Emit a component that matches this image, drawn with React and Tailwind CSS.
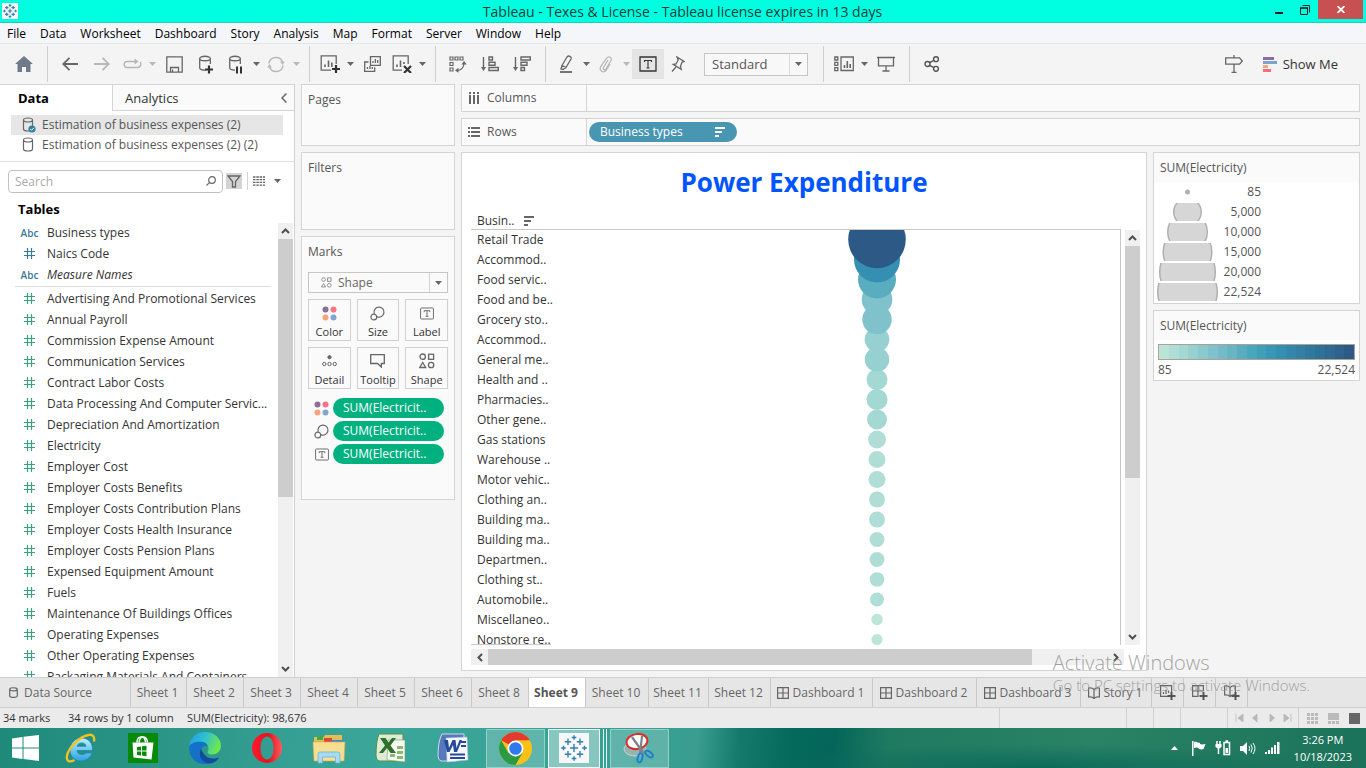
import React from 'react';

const UI = "font-['Open_Sans','Noto_Sans',sans-serif]";

const Svg = ({ w = 18, h = 18, children, className = '', ...rest }) => (
  <svg width={w} height={h} viewBox={`0 0 ${w} ${h}`} fill="none" stroke="#666" strokeWidth="1.3" className={`shrink-0 ${className}`} aria-hidden="true" {...rest}>
    {children}
  </svg>
);

const TableauMark = ({ size, weight = 1.4 }) => {
  const plus = (x, y, r) => `M${x - r} ${y}H${x + r}M${x} ${y - r}V${y + r}`;
  return (
    <svg width={size} height={size} viewBox="0 0 30 30" fill="none" stroke="#2f80ad" strokeWidth={weight} aria-hidden="true">
      <rect width="30" height="30" fill="#f7f7f7" stroke="none" />
      <path d={[plus(15, 15, 4), plus(15, 4.5, 2.3), plus(15, 25.5, 2.3), plus(4.5, 15, 2.3), plus(25.5, 15, 2.3), plus(9, 8.7, 3.2), plus(21, 8.7, 3.2), plus(9, 21.3, 3.2), plus(21, 21.3, 3.2)].join('')} />
    </svg>
  );
};

const Caret = ({ dim }) => (
  <svg width="7" height="4" viewBox="0 0 7 4" aria-hidden="true"><path d="M0 0h7L3.5 4z" fill={dim ? '#b8b8b8' : '#666'} /></svg>
);

const SortDesc = ({ color = '#666' }) => (
  <svg width="10" height="10" viewBox="0 0 10 10" aria-hidden="true" fill={color}><path d="M0 0h10v2H0zM0 4h7v2H0zM0 8h4v2H0z" /></svg>
);

const Cylinder = ({ check }) => (
  <Svg w={14} h={16} strokeWidth="1.2">
    <path d="M1.5 3v9c0 1.3 2 2 4.500 2s4.500-.7 4.500-2V3M1.500 3c0-1.200 2-2 4.500-2s4.500.8 4.500 2-2 2-4.500 2-4.500-.8-4.500-2z" />
    {check && <><circle cx="10" cy="12" r="3.600" fill="#2f80a3" stroke="none" /><path d="M8.300 12l1.300 1.300 2.200-2.500" stroke="#fff" strokeWidth="1" /></>}
  </Svg>
);

const BoxT = ({ w = 15, h = 13 }) => (
  <svg width={w} height={h} viewBox="0 0 15 13" fill="none" stroke="#666" aria-hidden="true">
    <rect x=".6" y=".6" width="13.800" height="11.800" rx="1" />
    <path d="M4.500 5V3.500h6V5M7.500 3.500v6M6 9.500h3" />
  </svg>
);
const ColorDots = () => (
  <svg width="15" height="15" viewBox="0 0 15 15" aria-hidden="true">
    <circle cx="3.500" cy="3.500" r="3" fill="#8a6f9c" /><circle cx="11.500" cy="3.500" r="3" fill="#fb7484" />
    <circle cx="3.500" cy="11.500" r="3" fill="#f4a57d" /><circle cx="11.500" cy="11.500" r="3" fill="#82a5cd" />
  </svg>
);
const SizeIcon = () => (
  <Svg w={15} h={15} strokeWidth="1.200"><path d="M4.300 7.800A5 5 0 1 1 7 10.700" /><circle cx="3.800" cy="11" r="2.900" /></Svg>
);
const ShapeIcon = ({ size = 16, stroke = '#666' }) => (
  <svg width={size} height={size} viewBox="0 0 16 16" fill="none" stroke={stroke} strokeWidth="1.300" aria-hidden="true">
    <circle cx="3.700" cy="3.700" r="2.700" /><rect x="9.600" y="1.300" width="5" height="5" /><path d="M3.700 9.500l3 5h-6z" /><circle cx="12.100" cy="12" r="2.700" />
  </svg>
);
const DetailIcon = () => (
  <Svg w={15} h={12} strokeWidth="1"><circle cx="7.500" cy="2.200" r="1.600" fill="#666" /><circle cx="2.300" cy="9" r="1.700" /><circle cx="7.500" cy="9" r="1.700" /><circle cx="12.700" cy="9" r="1.700" /></Svg>
);
const TooltipIcon = () => <Svg w={15} h={14}><path d="M.7.7h13.600v8.800h-3v3.500L7.500 9.500H.7z" /></Svg>;

const icons = {
  home: <Svg w={18} h={16} stroke="none"><path d="M9 0l9 8h-2.500v8H11v-5H7v5H2.500V8H0z" fill="#707b8a" /></Svg>,
  back: <Svg w={16} h={14} strokeWidth="1.800"><path d="M16 7H1M7.500.8L1.200 7l6.300 6.200" /></Svg>,
  forward: <Svg w={16} h={14} stroke="#b8b8b8" strokeWidth="1.800"><path d="M0 7h15M8.500.8L14.800 7l-6.300 6.200" /></Svg>,
  redo: <Svg w={19} h={12} stroke="#b5b5b5" strokeWidth="1.400"><path d="M14 3.500H4.500c-4.500 0-4.500 6 0 6h10c3.500 0 4-4 2.500-5.500" /><path d="M11.500.5l4 3-4 3z" fill="#b5b5b5" stroke="none" /></Svg>,
  save: <Svg w={17} h={17}><path d="M.8.8h15.400v15.400H.8zM4.500 16v-4.500h8V16M6.500 16v-2.500" /></Svg>,
  dbAdd: <Svg w={16} h={19}><path d="M8 15c-4 .3-6.300-.8-6.300-2V3.500M1.700 3.500c0-3 10.600-3 10.600 0s-10.600 3-10.600 0M12.300 3.500V9" /><path d="M7 14.500h8M11 10.500v8" stroke="#333" strokeWidth="2.200" /></Svg>,
  dbPause: <Svg w={16} h={19}><path d="M7 15c-3.500.2-5.300-.8-5.300-2V3.500M1.700 3.500c0-3 10.600-3 10.600 0s-10.600 3-10.600 0M12.300 3.500V9" /><path d="M9 11.500v7M13 11.500v7" stroke="#333" strokeWidth="2" /></Svg>,
  refresh: <Svg w={18} h={17} stroke="#b8b8b8" strokeWidth="1.500"><path d="M2 7.500A7 7 0 0 1 15.500 6M16 9.500A7 7 0 0 1 2.500 11" /><path d="M13 5.500h4.800L15.500 9zM.2 11.500H5L2.500 8z" fill="#b8b8b8" stroke="none" /></Svg>,
  newSheet: <Svg w={20} h={18}><path d="M11 15.200H1.200V.8h15V9" /><path d="M5 12V9.500M8.500 12V5.500M11.800 12V7.500" strokeWidth="1.600" /><path d="M12 14h8M16 10v8" stroke="#333" strokeWidth="2.200" /></Svg>,
  duplicate: <Svg w={17} h={17}><path d="M6.500.7h9.800v8.600H6.500zM9 7V5M11.400 7V3M13.700 7V4M4.500 6H.7v9.300h10v-4M3.500 13v-2M6 13v-3M8.300 13v-2" /></Svg>,
  clear: <Svg w={20} h={18}><path d="M10 15.200H1.200V.8h15V9" /><path d="M5 12V9.500M8.500 12V5.500M12 9V7" strokeWidth="1.600" /><path d="M12 11l7 7M19 11l-7 7" stroke="#333" strokeWidth="2.200" /></Svg>,
  swap: <Svg w={18} h={17} strokeWidth="1.200"><path d="M1 1h3v3H1zM6 1h3v3H6zM11 1h3v3h-3zM1 6.500h3v3H1zM1 12h3v3H1zM7.500 14.500c5 0 7.500-3 7.500-8" /><path d="M9.500 11.800v5L6 14.500zM12.500 8.500L15 5l2.700 3.500z" fill="#666" stroke="none" /></Svg>,
  sortAsc: <Svg w={18} h={16} strokeWidth="1.400"><path d="M2.500 1v11M8 1h3.500v3H8zM8 6.200h6v3H8zM8 11.500h9.300v3H8z" /><path d="M0 11h5l-2.500 4z" fill="#666" stroke="none" /></Svg>,
  sortDesc: <Svg w={18} h={16} strokeWidth="1.400"><path d="M2.500 1v11M8 1h9.300v3H8zM8 6.200h6v3H8zM8 11.500h3.500v3H8z" /><path d="M0 11h5l-2.500 4z" fill="#666" stroke="none" /></Svg>,
  highlight: <Svg w={16} h={18}><path d="M4 10.500L9 2c1.500-2 5-.5 4 2l-5 8.500-4-2zM4 10.500l-1 3.500 2 .5 3-2" /><path d="M2 17h12" strokeWidth="1.800" /></Svg>,
  clip: <Svg w={14} h={17} stroke="#b8b8b8"><path d="M9 4L4.500 11.500c-1 2 1.500 3 2.500 1.500l5-8.500c1.500-3-2.500-5-4.500-2L2 10c-2.500 4.500 2 7.500 5 4.500l4-6.500" /></Svg>,
  label: <Svg w={18} h={16} stroke="#333" strokeWidth="1.300"><path d="M1 1h16v14H1z" /><path d="M5.500 6V4.500h7V6M9 4.500v7.500M7.500 12h3" strokeWidth="1.100" /></Svg>,
  pin: <Svg w={14} h={16}><path d="M6 1l7 4.500-2 .8-1.500 4 .7 3-8-5 2.800-.5L7.200 4zM5 11l-4 4.500" /></Svg>,
  cards: <Svg w={20} h={16} strokeWidth="1.300"><path d="M.8 1h3v3h-3zM.8 6.300h3v3h-3zM.8 11.700h3v3h-3zM7 1h12.300v13.500H7z" /><path d="M10.500 12V9M13.300 12V5M16.200 12V8" strokeWidth="1.600" /></Svg>,
  present: <Svg w={18} h={16}><path d="M0 1.500h18M1.500 1.500v8.300h15V1.500M9 10v5M5.500 15h7" /></Svg>,
  share: <Svg w={16} h={16} stroke="#555" strokeWidth="1.400"><circle cx="3.500" cy="8" r="2.500" /><circle cx="12" cy="3.200" r="2.400" /><circle cx="12" cy="12.800" r="2.400" /><path d="M5.600 6.700l4.300-2.400M5.600 9.300l4.300 2.400" /></Svg>,
  signpost: <Svg w={18} h={18}><path d="M.7 2.800h13.800L17.300 6l-2.800 3.200H.7zM9 0v2.800M9 9.200V17M6.500 17.300h5" /></Svg>,
  showMe: <Svg w={14} h={15} stroke="none"><path d="M0 0h11v3H0z" fill="#8a6f9c" /><path d="M0 4h14v3H0z" fill="#7ba3cf" /><path d="M0 8h5v3H0z" fill="#f4a57d" /><path d="M0 12h8v3H0z" fill="#fb6a7c" /></Svg>,
};

const Tool = ({ icon, label, w = 'w-8', active }) => (
  <button type="button" aria-label={label} className={`${w} flex h-[30px] shrink-0 items-center justify-center ${active ? 'bg-[#e4e4e4]' : ''}`}>{icons[icon]}</button>
);
const Drop = ({ label, dim }) => (
  <button type="button" aria-label={label} className="flex h-[30px] w-3 shrink-0 items-center justify-center"><Caret dim={dim} /></button>
);
const Sep = ({ wide }) => <div className={`mr-[6px] h-9 w-px shrink-0 bg-[#d0d0d0] ${wide ? 'ml-[15px]' : 'ml-[7px]'}`} />;

function Toolbar() {
  return (
    <div className="flex h-10 shrink-0 items-center bg-[#f4f4f4] pl-2 pr-7">
      <Tool icon="home" label="Start page" /><Sep />
      <Tool icon="back" label="Undo" /><Tool icon="forward" label="Redo" />
      <Tool icon="redo" label="Replay" w="w-7" /><Drop label="Replay options" dim />
      <Tool icon="save" label="Save" /><Tool icon="dbAdd" label="New data source" />
      <Tool icon="dbPause" label="Pause updates" w="w-7" /><Drop label="Pause options" />
      <Tool icon="refresh" label="Run update" w="w-7" /><Drop label="Update options" dim /><Sep />
      <Tool icon="newSheet" label="New worksheet" w="w-7" /><Drop label="New options" />
      <Tool icon="duplicate" label="Duplicate" /><Tool icon="clear" label="Clear sheet" w="w-7" /><Drop label="Clear options" /><Sep />
      <Tool icon="swap" label="Swap rows and columns" /><Tool icon="sortAsc" label="Sort ascending" /><Tool icon="sortDesc" label="Sort descending" /><Sep />
      <Tool icon="highlight" label="Highlight" w="w-7" /><Drop label="Highlight options" />
      <Tool icon="clip" label="Group" w="w-7" /><Drop label="Group options" dim />
      <Tool icon="label" label="Show mark labels" active /><Tool icon="pin" label="Fix axes" w="w-7" />
      <div className="relative ml-3 flex h-[23px] w-[104px] shrink-0 items-center border border-[#c6c6c6] bg-[#f8f8f8]">
        <select aria-label="Fit" className="h-full w-full appearance-none bg-transparent pl-[7px] text-[13px] leading-5 text-[#555] outline-none"><option>Standard</option></select>
        <span className="pointer-events-none absolute inset-y-0 right-0 flex w-[18px] items-center justify-center border-l border-[#dcdcdc]"><Caret /></span>
      </div>
      <Sep wide />
      <Tool icon="cards" label="Show cards" w="w-7" /><Drop label="Card options" /><Tool icon="present" label="Presentation mode" /><Sep />
      <Tool icon="share" label="Share" />
      <div className="flex-1" />
      <Tool icon="signpost" label="Guide" w="w-7" />
      <button type="button" className="ml-[15px] flex items-center gap-[6px] text-[13px] leading-5 text-[#333]">{icons.showMe}Show Me</button>
    </div>
  );
}

const Chevron = ({ d }) => <svg width="9" height="6" viewBox="0 0 9 6" fill="none" stroke="#505050" strokeWidth="2" aria-hidden="true"><path d={d} /></svg>;
const VScroll = ({ thumb }) => (
  <div className="flex w-[15px] shrink-0 flex-col bg-[#f0f0f0]">
    <button type="button" aria-label="Scroll up" className="flex h-4 items-center justify-center"><Chevron d="M1 5l3.500-3.500L8 5" /></button>
    <div className={`${thumb} bg-[#cdcdcd]`} />
    <div className="flex-1" />
    <button type="button" aria-label="Scroll down" className="flex h-4 items-center justify-center"><Chevron d="M1 1l3.500 3.500L8 1" /></button>
  </div>
);

const dims = [['Abc', 'Business types'], ['#', 'Naics Code'], ['Abc', 'Measure Names']];
const measures = ['Advertising And Promotional Services', 'Annual Payroll', 'Commission Expense Amount', 'Communication Services', 'Contract Labor Costs', 'Data Processing And Computer Servic...', 'Depreciation And Amortization', 'Electricity', 'Employer Cost', 'Employer Costs Benefits', 'Employer Costs Contribution Plans', 'Employer Costs Health Insurance', 'Employer Costs Pension Plans', 'Expensed Equipment Amount', 'Fuels', 'Maintenance Of Buildings Offices', 'Operating Expenses', 'Other Operating Expenses', 'Packaging Materials And Containers'];

const HashIcon = ({ color }) => <svg width="11" height="11" viewBox="0 0 11 11" fill="none" stroke={color} strokeWidth="1.200" aria-hidden="true"><path d="M3.500 0v11M7.500 0v11M0 3.500h11M0 7.500h11" /></svg>;

const Field = ({ kind, name, color, italic }) => (
  <li className={`flex h-[21px] shrink-0 items-center whitespace-nowrap text-[12px] leading-5 text-[#333] ${italic ? 'italic' : ''}`}>
    <span className="flex w-[29px] shrink-0 justify-center not-italic">
      {kind === 'Abc' ? <span className="text-[10px] font-semibold text-[#3a7a99]">Abc</span> : <HashIcon color={color} />}
    </span>
    <span className="ml-[3px]">{name}</span>
  </li>
);

function DataPane() {
  return (
    <aside className="flex w-[295px] shrink-0 flex-col border-r border-[#d0d0d0] bg-white">
      <div className="flex h-[27px] shrink-0 border-t border-[#d4d4d4]">
        <button type="button" className="w-[112px] pl-[18px] text-left text-[13px] font-bold leading-5 text-black">Data</button>
        <button type="button" className="flex-1 border-b border-l border-[#d4d4d4] bg-[#fafafa] pl-3 text-left text-[13px] leading-5 text-[#333]">Analytics</button>
        <button type="button" aria-label="Collapse pane" className="flex w-[21px] items-center justify-center border-b border-[#d4d4d4] bg-[#fafafa]"><Svg w={6} h={10} strokeWidth="1.500"><path d="M5.500.5L1 5l4.500 4.500" /></Svg></button>
      </div>
      <ul className="flex h-[51px] shrink-0 flex-col border-b border-[#e0e0e0] pt-1 text-[12px] leading-5 text-[#555]">
        <li className="ml-[11px] mr-[11px] flex h-5 items-center gap-[6px] bg-[#e6e6e6] pl-[11px]"><Cylinder check /><span>Estimation of business expenses (2)</span></li>
        <li className="ml-[11px] mr-[11px] flex h-5 items-center gap-[6px] pl-[11px]"><Cylinder /><span>Estimation of business expenses (2) (2)</span></li>
      </ul>
      <div className="flex h-[37px] shrink-0 items-center pl-2 pt-px">
        <div className="flex h-[23px] w-[215px] items-center rounded-sm border border-[#c0c0c0] pr-[6px]">
          <input type="text" aria-label="Search" placeholder="Search" className="h-full min-w-0 flex-1 px-[6px] text-[12px] outline-none placeholder:text-[#aaa]" />
          <Svg w={10} h={10} strokeWidth="1.200"><circle cx="6" cy="4" r="3.300" /><path d="M3.700 6.300L.5 9.500" /></Svg>
        </div>
        <button type="button" aria-label="Filter" className="ml-[3px] flex size-4 items-center justify-center bg-[#d4d4d4]"><Svg w={14} h={13}><path d="M1 1h12L8.500 6.500V12h-3V6.500z" /></Svg></button>
        <div className="mx-[5px] h-[18px] w-px bg-[#d4d4d4]" />
        <button type="button" aria-label="View options" className="flex items-center gap-[9px]">
          <Svg w={12} h={10} strokeWidth="1.300" strokeDasharray="2.500 .8"><path d="M0 1h12M0 3.700h12M0 6.400h12M0 9.100h12" /></Svg><Caret />
        </button>
      </div>
      <h2 className="h-[24px] shrink-0 pl-[18px] text-[13px] font-bold leading-5 text-black">Tables</h2>
      <div className="mr-px flex min-h-0 flex-1">
        <div className="min-w-0 flex-1 overflow-hidden pl-[15px]">
          <ul className="-mt-px mr-[7px] border-b border-[#dcdcdc] pb-px">{dims.map(([k, n]) => <Field key={n} kind={k} name={n} color="#3a7a99" italic={n === 'Measure Names'} />)}</ul>
          <ul className="pt-px">{measures.map((n) => <Field key={n} kind="#" name={n} color="#3aa17e" />)}</ul>
        </div>
        <VScroll thumb="h-[258px]" />
      </div>
    </aside>
  );
}

const card = 'border border-[#d4d4d4] bg-[#fafafa]';
const MarkButton = ({ icon, label }) => (
  <button type="button" className="flex h-[42px] flex-col items-center justify-between border border-[#d0d0d0] pt-[5px] text-[11px] leading-4 text-[#333]">
    <span className="flex h-4 items-center">{icon}</span><span>{label}</span>
  </button>
);

function CardsColumn() {
  return (
    <div className="flex w-[154px] shrink-0 flex-col gap-[6px] text-[12px] leading-4 text-[#555]">
      <section className={`${card} h-[62px] px-[6px] pt-[7px]`}>Pages</section>
      <section className={`${card} h-[78px] px-[6px] pt-[7px]`}>Filters</section>
      <section className={`${card} h-[264px] px-[6px] pt-[7px]`}>
        <h3>Marks</h3>
        <div className="relative mt-3 flex h-[21px] items-center border border-[#c6c6c6]">
          <span className="pointer-events-none absolute left-3"><ShapeIcon size={11} stroke="#888" /></span>
          <select aria-label="Mark type" className="h-full w-full appearance-none bg-transparent pl-[29px] text-[12px] leading-4 text-[#666] outline-none"><option>Shape</option></select>
          <span className="pointer-events-none absolute inset-y-0 right-0 flex w-[18px] items-center justify-center border-l border-[#d4d4d4]"><Caret /></span>
        </div>
        <div className="mt-[6px] grid grid-cols-3 gap-[6px]">
          <MarkButton icon={<ColorDots />} label="Color" /><MarkButton icon={<SizeIcon />} label="Size" /><MarkButton icon={<BoxT w={14} h={13} />} label="Label" />
          <MarkButton icon={<DetailIcon />} label="Detail" /><MarkButton icon={<TooltipIcon />} label="Tooltip" /><MarkButton icon={<ShapeIcon />} label="Shape" />
        </div>
        <ul className="mt-[9px] flex flex-col gap-[3px]">
          {[<ColorDots />, <SizeIcon />, <BoxT w={14} h={13} />].map((icon, i) => (
            <li key={i} className="flex items-center"><span className="flex w-[25px] justify-center pl-[2px]">{icon}</span>
              <span className="mr-[4px] flex-1 rounded-full bg-[#00b180] pl-[10px] text-[12px] leading-5 text-white">SUM(Electricit..</span></li>
          ))}
        </ul>
      </section>
    </div>
  );
}

const Shelf = ({ icon, name, children }) => (
  <div className={`${card} flex h-7 shrink-0`}>
    <div className="flex w-[125px] shrink-0 items-center gap-[7px] border-r border-[#d4d4d4] pl-[6px] text-[12px] leading-5 text-[#555]">{icon}{name}</div>
    <div className="flex flex-1 items-center pl-[2px]">{children}</div>
  </div>
);

const rows = [['Retail Trade', 28.800, '#2c5985'], ['Accommod..', 23, '#348fb2'], ['Food servic..', 19, '#5aadbf'], ['Food and be..', 15.300, '#80c2cb'], ['Grocery sto..', 14.700, '#80c2cb'], ['Accommod..', 12.300, '#96d0d0'], ['General me..', 12.200, '#96d0d0'], ['Health and ..', 10.500, '#a3d8d3'], ['Pharmacies..', 10.500, '#a3d8d3'], ['Other gene..', 10, '#a3d8d3'], ['Gas stations', 9, '#b0ded6'], ['Warehouse ..', 8.500, '#b0ded6'], ['Motor vehic..', 8.500, '#b0ded6'], ['Clothing an..', 8, '#b0ded6'], ['Building ma..', 8, '#b0ded6'], ['Building ma..', 7.500, '#b0ded6'], ['Departmen..', 7.500, '#b0ded6'], ['Clothing st..', 7.300, '#b0ded6'], ['Automobile..', 7, '#b0ded6'], ['Miscellaneo..', 5.700, '#bce5d9'], ['Nonstore re..', 5.500, '#bce5d9']];

function Sheet() {
  return (
    <section className="flex min-w-0 flex-1 flex-col border border-[#d4d4d4] bg-white pb-[5px] pl-[9px] pr-[6px]">
      <h1 className="h-[59px] shrink-0 pr-[3px] pt-[11px] text-center text-[26px] font-bold leading-9 text-[#0055ff]">Power Expenditure</h1>
      <div className="flex min-h-0 flex-1 gap-1">
        <div className="flex min-w-0 flex-1 flex-col">
          <div className="flex h-[18px] shrink-0 items-center gap-[9px] border-b border-[#c8c8c8] pl-[6px] text-[12px] leading-4 text-[#333]">Busin..<SortDesc /></div>
          <div className="flex min-h-0 flex-1 overflow-hidden border-r border-[#c8c8c8]">
            <div className="flex w-20 shrink-0 flex-col border-b border-[#c8c8c8]">
              <ul className="min-h-0 flex-1 overflow-y-clip pl-[6px]">
                {rows.map(([n], i) => <li key={i} className="h-5 whitespace-nowrap text-[12px] leading-5 text-[#333]">{n}</li>)}
              </ul>
            </div>
            <svg width="652" height="420" className="shrink-0" role="img" aria-label="Electricity by business type">
              {rows.map(([, r, c], i) => <circle key={i} cx="326" cy={9.5 + i * 20} r={r} fill={c} />).reverse()}
            </svg>
          </div>
        </div>
        <div className="flex pt-[18px]"><VScroll thumb="h-[232px]" /></div>
      </div>
      <div className="mr-4 mt-1 flex h-4 shrink-0 items-center bg-[#f0f0f0]">
        <button type="button" aria-label="Scroll left" className="flex h-full w-[17px] items-center justify-center"><svg width="6" height="9" fill="none" stroke="#505050" strokeWidth="2"><path d="M5 1L1.500 4.500 5 8" /></svg></button>
        <div className="h-full w-5/6 bg-[#cdcdcd]" />
        <div className="flex-1" />
        <button type="button" aria-label="Scroll right" className="flex h-full w-[17px] items-center justify-center"><svg width="6" height="9" fill="none" stroke="#505050" strokeWidth="2"><path d="M1 1l3.500 3.500L1 8" /></svg></button>
      </div>
    </section>
  );
}

const sizes = [['85', 2.500], ['5,000', 13.800], ['10,000', 19.800], ['15,000', 24.300], ['20,000', 27.800], ['22,524', 29.800]];
const ramp = ['#bce5d9', '#b0ded6', '#a3d8d3', '#96d0d0', '#8bc9ce', '#80c2cb', '#74bbc7', '#68b4c3', '#5aadbf', '#4aa6bb', '#429eb8', '#3b96b5', '#348fb2', '#3487ab', '#3380a4', '#31789d', '#307197', '#2f6991', '#2e618b', '#2c5985'];

function Legends() {
  return (
    <div className="flex w-[207px] shrink-0 flex-col gap-[6px] text-[12px] leading-5 text-[#555]">
      <section className="h-[152px] border border-[#d4d4d4] bg-white">
        <h3 className="h-[29px] bg-[#fafafa] pl-[6px] pt-[5px]">SUM(Electricity)</h3>
        <ul>
          {sizes.map(([n, r]) => (
            <li key={n} className="flex h-5 items-center">
              <svg width="66" height="18" className="shrink-0" aria-hidden="true"><circle cx="33.500" cy="9" r={r} fill={r < 5 ? '#b0b0b0' : '#d6d6d6'} stroke="#b0b0b0" strokeWidth={r < 5 ? 0 : 1.5} /></svg>
              <span className="w-[41px] text-right">{n}</span>
            </li>
          ))}
        </ul>
      </section>
      <section className="h-[71px] border border-[#d4d4d4] bg-white">
        <h3 className="h-[29px] bg-[#fafafa] pl-[6px] pt-[5px]">SUM(Electricity)</h3>
        <div className="mx-1 mt-1 flex h-4 border border-[#a9a396]">{ramp.map((c) => <div key={c} className="flex-1" style={{ background: c }} />)}</div>
        <div className="flex justify-between px-1">
          <span>85</span><span>22,524</span>
        </div>
      </section>
    </div>
  );
}

const GridIcon = ({ add }) => <Svg w={add ? 16 : 12} h={add ? 15 : 12} strokeWidth="1.200"><path d={add ? 'M6.500 11.400H.6V.6h10.800V6M6 .6v10.800M.6 6h10.800' : 'M.6.6h10.800v10.800H.6zM6 .6v10.800M.6 6h10.800'} />{add && <path d="M7.500 11h8M11.500 7v8" stroke="#555" strokeWidth="2" />}</Svg>;
const BookIcon = ({ add }) => <Svg w={add ? 16 : 12} h={add ? 15 : 12} strokeWidth="1.200"><path d="M6 2.500v9M.6 1c2.500-.5 4 0 5.400 1.500C7.400 1 9 .5 11.400 1v9C9 9.500 7.400 10 6 11.500 4.600 10 3 9.500.6 10z" />{add && <path d="M7.500 11h8M11.500 7v8" stroke="#555" strokeWidth="2" />}</Svg>;
const SheetAdd = () => <Svg w={16} h={15} strokeWidth="1.200"><path d="M8 11.400H.6V.6h11V7M3.500 9V7M6 9V4.500M8.500 8V5.500" /><path d="M7.500 11h8M11.500 7v8" stroke="#555" strokeWidth="2" /></Svg>;

const tabs = [['Sheet 1', 'w-[56px]'], ['Sheet 2', 'w-[57px]'], ['Sheet 3', 'w-[57px]'], ['Sheet 4', 'w-[57px]'], ['Sheet 5', 'w-[57px]'], ['Sheet 6', 'w-[57px]'], ['Sheet 8', 'w-[57px]'], ['Sheet 9', 'w-[57px]'], ['Sheet 10', 'w-[63px]'], ['Sheet 11', 'w-[60px]'], ['Sheet 12', 'w-[62px]'], ['Dashboard 1', 'w-[102px]', 'g'], ['Dashboard 2', 'w-[104px]', 'g'], ['Dashboard 3', 'w-[104px]', 'g'], ['Story 1', 'w-[71px]', 'b']];

const Tabs = () => (
  <nav className="flex h-[31px] shrink-0 overflow-hidden border-y border-[#d0d0d0] bg-[#e6e6e6] text-[12px] leading-5 text-[#666]">
    <button type="button" className="flex w-[131px] shrink-0 items-center gap-[6px] border-r border-[#c8c8c8] pl-[9px]">
      <Svg w={9} h={11} strokeWidth="1.200"><path d="M.7 2.300v6.400C.7 11 8.300 11 8.300 8.700V2.300M.7 2.300C.7.200 8.300.200 8.300 2.300S.7 4.400.7 2.300" /></Svg>Data Source
    </button>
    {tabs.map(([n, w, k]) => (
      <button key={n} type="button" className={`${w} flex shrink-0 items-center justify-center gap-1 whitespace-nowrap border-r border-[#c8c8c8] pr-[2px] ${n === 'Sheet 9' ? 'bg-white font-bold text-[#555]' : ''}`}>
        {k === 'g' && <GridIcon />}{k === 'b' && <BookIcon />}{n}
      </button>
    ))}
    {[['New sheet', <SheetAdd />], ['New dashboard', <GridIcon add />], ['New story', <BookIcon add />]].map(([l, ic]) => (
      <button key={l} type="button" aria-label={l} className="flex w-8 shrink-0 items-center justify-center border-r border-[#c8c8c8]">{ic}</button>
    ))}
  </nav>
);

const Status = () => (
  <div className="flex h-5 shrink-0 items-center bg-[#ebebeb] pl-[3px] text-[11px] leading-5 text-[#333]">
    <span className="w-[65px]">34 marks</span><span className="w-[119px]">34 rows by 1 column</span><span className="flex-1">SUM(Electricity): 98,676</span>
    <div className="flex h-full [&>*]:border-l [&>*]:border-[#d0d0d0]">
      <div className="w-[127px]" /><div className="w-[27px]" /><div className="w-[27px]" /><div className="w-[47px]" />
      <div className="flex w-[71px] items-center justify-around px-[3px]">
        {['M1 0v8M8 0v8L3 4z', 'M6 0v8L1.500 4z', 'M3 0v8l4.500-4z', 'M8 0v8M1 0v8l5-4z'].map((d, i) => (
          <button key={i} type="button" aria-label={['First', 'Previous', 'Next', 'Last'][i]}><svg width="9" height="8" fill="#b8b8b8" stroke="#b8b8b8" strokeWidth=".8"><path d={d} /></svg></button>
        ))}
      </div>
      <div className="flex w-[68px] items-center justify-between pl-2 pr-[6px]">
        <svg width="11" height="11" fill="#bbb" aria-label="Tabs"><path d="M0 0h3v3H0zM4 0h3v3H4zM8 0h3v3H8zM0 4h3v3H0zM4 4h3v3H4zM8 4h3v3H8zM0 8h3v3H0zM4 8h3v3H4zM8 8h3v3H8z" /></svg>
        <svg width="11" height="11" fill="#bbb" aria-label="Filmstrip"><path d="M0 0h11v7H0zM0 8h3v3H0zM4 8h3v3H4zM8 8h3v3H8z" /></svg>
        <svg width="11" height="11" fill="#666" aria-label="Sheet sorter"><path d="M0 0h11v11H0z" /></svg>
      </div>
    </div>
  </div>
);

const apps = {
  'Internet Explorer': (
    <svg width="32" height="32" viewBox="0 0 32 32" fill="none">
      <defs><linearGradient id="ie" x2="0" y2="1"><stop stopColor="#bdf0ff" /><stop offset="1" stopColor="#2ba3df" /></linearGradient></defs>
      <path d="M27.500 18.500H12c.3 4 6 5.500 9 2.500h6C25 26.500 20.500 29 16 29 9 29 5 24 5 18S9.500 6 16.500 6C23.500 6 28 11 27.500 18.500zM12 14.300h9c-.5-4.500-8-4.500-9 0z" fill="url(#ie)" stroke="#1d86c2" strokeWidth=".8" />
      <path d="M29 9.500c1-5-1.500-7.500-5.500-6.500C15 4.500 4 15 2 23.500 1 29 4 31 9.500 28" stroke="#f6c21c" strokeWidth="2.300" />
    </svg>),
  Store: (
    <svg width="30" height="30" viewBox="0 0 30 30"><path d="M0 0h30v30H0z" fill="#078a07" /><path d="M4.500 9.500h21l-2 17-18-2z" fill="#fff" /><path d="M9 9.500c0-7 8-8 8.500 0M11 9.500c1-8 8-6.500 8.500 0" fill="none" stroke="#fff" strokeWidth="1.500" /><path d="M9 14l4-.5v4H9zM14 13.300l4.500-.5v4.700H14zM9 18.500h4v4l-4-.5zM14 18.500h4.500v4.700l-4.500-.6z" fill="#078a07" /></svg>),
  Edge: (
    <svg width="34" height="34" viewBox="0 0 32 32">
      <defs><linearGradient id="eg" x2="1" y2=".3"><stop stopColor="#2499e2" /><stop offset=".5" stopColor="#2bbfd8" /><stop offset="1" stopColor="#6ce552" /></linearGradient></defs>
      <path d="M1 15C2 6 8 1 16 1c9 0 15 6 15 13 0 5-4 8-8.500 8-3.500 0-5-1.500-3.500-3.500C20.500 14 17 10 12 10 6 10 2 13 1 15z" fill="url(#eg)" />
      <path d="M1 15c1-3 5-5 9.500-5 5.500 0 7.500 2 8 4-6-1-9 7-4 13 2 2 4 3 6 3.500-5 1.500-11 .5-15-3.500-3-3-4.700-7-4.500-12z" fill="#1471c7" />
      <path d="M12.500 17c-4 6 1 13.500 8 13.500 4 0 7-2.500 9-6-6 3-14 1.500-17-7.500z" fill="#104e9c" />
    </svg>),
  Opera: (
    <svg width="32" height="32" viewBox="0 0 32 32"><defs><linearGradient id="op" x2="1"><stop stopColor="#ff1b2d" /><stop offset=".55" stopColor="#e2121f" /><stop offset="1" stopColor="#ff5c5c" /></linearGradient></defs><path fillRule="evenodd" d="M16 1a15 15 0 1 0 0 30 15 15 0 0 0 0-30zm0 3.500c4 0 6.500 5 6.500 11.500S20 27.500 16 27.500 9.500 22.500 9.500 16 12 4.500 16 4.500z" fill="url(#op)" /></svg>),
  'File Explorer': (
    <svg width="34" height="32" viewBox="0 0 34 32"><path d="M2 5h10l1-2h17v25H2z" fill="#e4bd55" /><path d="M5 4h6v4H5z" fill="#3eaa48" /><path d="M12 6h8v4h-8z" fill="#d9473d" /><path d="M20 8h10v4H20z" fill="#4389cf" /><path d="M1 10h32l-1 19H2z" fill="#f7df91" stroke="#d6ac49" strokeWidth=".6" /><path d="M6 31V22q0-2 2-2h18q2 0 2 2v9h-4.500v-6h-13v6z" fill="#a6dbf2" stroke="#6ab4dc" strokeWidth=".8" /></svg>),
  Excel: (
    <svg width="32" height="32" viewBox="0 0 32 32"><path d="M4 2h24v18L22 29H4q-3-1-3-5 0-15 3-22z" fill="#ddebd7" stroke="#59913f" /><path d="M13 8h17v22l-18-2z" fill="#f5f9f2" stroke="#729d60" strokeWidth=".6" /><path d="M22 14h6v3h-6zM22 19h6v3h-6zM22 24h6v3h-6zM15 22h5v3h-5z" fill="#8cb774" /><path d="M5 6l5.500 0 3 4.500L17 6h4l-5.500 7.500L21 21h-5.500l-3.500-5-4 5H4l6-7.500z" fill="#31702b" /></svg>),
  Word: (
    <svg width="32" height="32" viewBox="0 0 32 32"><path d="M5 2h22v18l-8 9H4q-3-1-3-5Q1 9 5 2z" fill="#5779bb" stroke="#cfd9ef" /><path d="M9 6l21-1 1 23-21 2z" fill="#f6f8fd" stroke="#a9b8d8" strokeWidth=".6" /><path d="M7 8h4l1 8 3.500-8h3l1 8 3-8h2.500l-5 12h-3l-1-7-3.500 7H10z" fill="#254a9a" /><path d="M24 10h5M24 14h5M13 22.500h15M13 26h15" stroke="#254a9a" strokeWidth="2" /></svg>),
  Chrome: (
    <svg width="33" height="33" viewBox="0 0 32 32"><circle cx="16" cy="16" r="16" fill="#fbc116" /><path d="M16 16L2.150 8A16 16 0 0 1 29.850 8L16 8z" fill="#e33b2e" /><path d="M2.150 8l6.920 12L16 24l-3.500 7.600A16 16 0 0 1 2.150 8z" fill="#2b9a47" /><path d="M9.100 20L16 24l6.900-4L16 32A16 16 0 0 1 9 30.400z" fill="#2b9a47" /><circle cx="16" cy="16" r="7.700" fill="#fff" /><circle cx="16" cy="16" r="6.100" fill="#2f78ee" /></svg>),
  Tableau: <TableauMark size={30} />,
  'Snipping Tool': (
    <svg width="32" height="32" viewBox="0 0 32 32" fill="none"><ellipse cx="12" cy="17" rx="11" ry="7" fill="#a9b5b2" fillOpacity=".7" stroke="#c8d1cf" /><ellipse cx="14" cy="9.500" rx="10.500" ry="7.500" fill="#fff" stroke="#d8322f" strokeWidth="2" transform="rotate(-10 14 9.500)" /><path d="M9 5l12 17M19 4l-2 18" stroke="#7a8388" strokeWidth="2.200" /><ellipse cx="17" cy="26" rx="2.300" ry="4.500" stroke="#1e80cd" strokeWidth="2" transform="rotate(15 17 26)" /><ellipse cx="26" cy="22" rx="2.300" ry="4.500" stroke="#1e80cd" strokeWidth="2" transform="rotate(-50 26 22)" /></svg>),
};

function Taskbar() {
  return (
    <footer className="flex h-10 shrink-0 items-center overflow-hidden bg-[radial-gradient(ellipse_22%_60%_at_76%_100%,#0c6a5a_0%,transparent_100%),linear-gradient(95deg,#1f8a7a_0%,#3ba69a_28%,#36a094_48%,#3a9d90_51%,#157a6b_54%,#04695a_58%,#04665a_61%,#1f7a60_65%,#2a8364_80%,#1b725a_100%)]">
      <button type="button" aria-label="Start" className="flex h-full w-[50px] shrink-0 items-center justify-center"><svg width="27" height="26" viewBox="0 0 27 26" fill="#fff"><path d="M0 3.500L10.500 2v10.500H0zM11.500 1.800L27 0v12.500H11.500zM0 13.500h10.500V24L0 22.500zM11.500 13.500H27V26l-15.500-2z" /></svg></button>
      {Object.entries(apps).map(([n, ic]) => {
        const open = n === 'Chrome' || n === 'Snipping Tool';
        return (
          <button key={n} type="button" aria-label={n} className="flex h-full w-[62px] shrink-0 items-center justify-center">
            {open && <span className="flex h-[39px] w-[59px] items-center justify-center border border-white/35 bg-white/20">{ic}</span>}
            {n === 'Tableau' && <span className="flex h-[39px] w-[59px] border-r border-white/90"><span className="mr-[2px] flex flex-1 border-r border-white/90"><span className="mr-[3px] flex flex-1 items-center justify-center border border-white/90 bg-white/40">{ic}</span></span></span>}
            {!open && n !== 'Tableau' && ic}
          </button>
        );
      })}
      <div className="flex-1" />
      <div className="flex items-center gap-[9px] pr-[14px]">
        <svg width="7" height="4" fill="#fff"><path d="M3.500 0L7 4H0z" /></svg>
        <svg width="15" height="15" viewBox="0 0 15 15" className="ml-1" fill="#fff"><path d="M1 0h1.500v15H1zM3 1c3-1 4 1 6 1v1c2 1 4 0 5.500 0l-2 5C10 9 8 8 7 7 5 6 4 7 3 7z" /></svg>
        <svg width="16" height="16" viewBox="0 0 16 16" fill="none" stroke="#fff" strokeWidth="1.500"><path d="M2 1v3M5 1v3M3.500 8v6" /><path d="M.5 4h6v3l-3 2-3-2z" fill="#fff" stroke="none" /><path d="M9 2.500h5.500v12H9zM10.500 1h2.500" /><path d="M10.500 8h2.500v5h-2.500z" fill="#fff" stroke="none" /></svg>
        <svg width="16" height="15" viewBox="0 0 16 15" fill="none" stroke="#fff"><path d="M0 5h3l4-4v13l-4-4H0z" fill="#fff" stroke="none" /><path d="M9 5q1.500 2.500 0 5M11 3.500q2.500 4 0 8M13 2q4 5.500 0 11" /></svg>
        <svg width="15" height="12" viewBox="0 0 15 12" fill="#fff"><path d="M0 10h2v2H0zM3 8h2v4H3zM6 5.500h2V12H6zM9 3h2v9H9zM12 0h2.500v12H12z" /></svg>
        <div className="ml-[5px] text-center text-[11px] leading-[17px] text-white"><div>3:26 PM</div><div>10/18/2023</div></div>
      </div>
    </footer>
  );
}

export default function App() {
  return (
    <div className={`${UI} relative flex h-screen min-h-[600px] flex-col overflow-hidden bg-[#f4f4f4]`}>
      <header className="flex h-[23px] shrink-0 items-start border-b border-[#1ccfba] bg-[#00ffe1]">
        <div className="flex flex-1 pl-[2px] pt-[3px]"><TableauMark size={16} weight={2.2} /></div>
        <div className="text-[14px] leading-[23px] text-[#163b38]">Tableau - Texes &amp; License - Tableau license expires in 13 days</div>
        <div className="flex flex-1 justify-end pr-[3px]">
          <button type="button" aria-label="Minimize" className="flex h-[19px] w-[26px] items-center justify-center"><svg width="8" height="6" className="mt-1"><path d="M0 3h8v2H0z" fill="#222" /></svg></button>
          <button type="button" aria-label="Restore" className="flex h-[19px] w-[26px] items-center justify-center"><svg width="10" height="10" fill="none" stroke="#222"><path d="M.5 3h7v6.500h-7z" /><path d="M0 3h8" strokeWidth="1.500" /><path d="M2.500.5h7v7" /></svg></button>
          <button type="button" aria-label="Close" className="flex h-[19px] w-[45px] items-center justify-center bg-[#c75050]"><svg width="8" height="7" stroke="#fff" strokeWidth="1.800"><path d="M.5 0l7 7M7.500 0l-7 7" /></svg></button>
        </div>
      </header>
      <nav className="flex h-[21px] shrink-0 items-center gap-[14px] border-b border-[#e6e6e6] bg-[#f5f6f9] pl-[7px] pt-px text-[12px] leading-5 text-black">
        {['File', 'Data', 'Worksheet', 'Dashboard', 'Story', 'Analysis', 'Map', 'Format', 'Server', 'Window', 'Help'].map((m) => <button key={m} type="button">{m}</button>)}
      </nav>
      <Toolbar />
      <main className="flex min-h-0 flex-1">
        <DataPane />
        <div className="flex min-w-0 flex-1 gap-[6px] pb-[6px] pl-[6px] pr-[6px]">
          <CardsColumn />
          <div className="flex min-w-0 flex-1 flex-col gap-[6px]">
            <Shelf name="Columns" icon={<svg width="12" height="12" fill="#666"><path d="M1 0h2v2H1zM5 0h2v2H5zM9 0h2v2H9zM1 3h2v9H1zM5 3h2v9H5zM9 3h2v9H9z" /></svg>} />
            <Shelf name="Rows" icon={<svg width="12" height="11" fill="#666"><path d="M0 0h2v2H0zM3 0h9v2H3zM0 4h2v2H0zM3 4h9v2H3zM0 8h2v2H0zM3 8h9v2H3z" /></svg>}>
              <span className="flex h-5 w-[148px] items-center justify-between rounded-full bg-[#4996b2] pl-[11px] pr-3 text-[12px] leading-5 text-white">Business types<SortDesc color="#fff" /></span>
            </Shelf>
            <div className="flex min-h-0 flex-1 gap-[6px]"><Sheet /><Legends /></div>
          </div>
        </div>
      </main>
      <Tabs />
      <Status />
      <Taskbar />
      <div className="pointer-events-none absolute bottom-[73px] right-14 whitespace-nowrap font-light text-[#8c8c8c]/80">
        <div className="text-[20px] leading-6">Activate Windows</div>
        <div className="text-[15px] leading-5">Go to PC settings to activate Windows.</div>
      </div>
    </div>
  );
}
